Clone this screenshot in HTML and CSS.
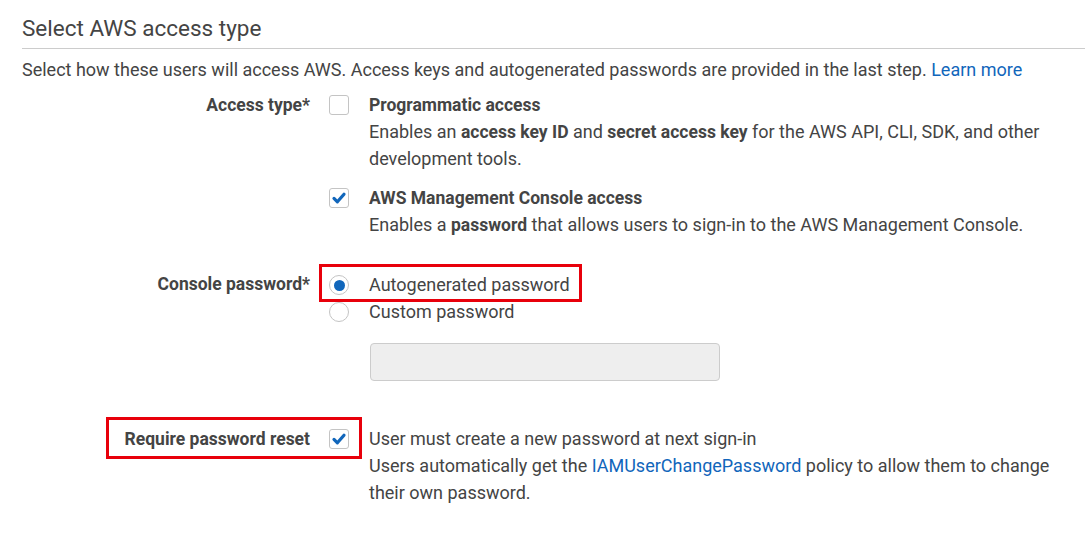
FILE: index.html
```html
<!DOCTYPE html>
<html>
<head>
<meta charset="utf-8">
<link rel="stylesheet" href="styles.css">
</head>
<body>
<div class="page">
  <h2 class="title">Select AWS access type</h2>
  <p class="intro">Select how these users will access AWS. Access keys and autogenerated passwords are provided in the last step. <a href="#" class="link">Learn more</a></p>

  <div class="row">
    <div class="label">Access type*</div>
    <div class="control">
      <div class="option">
        <span class="box"></span>
        <div class="otext">
          <div class="strong">Programmatic access</div>
          <div>Enables an <b>access key ID</b> and <b>secret access key</b> for the AWS API, CLI, SDK, and other development tools.</div>
        </div>
      </div>
      <div class="option second">
        <span class="box checked"><svg viewBox="0 0 20 20" width="20" height="20"><path d="M5 10.4 L8.4 13.8 L15 6.2" fill="none" stroke="#1166bb" stroke-width="3.2" stroke-linecap="round" stroke-linejoin="round"/></svg></span>
        <div class="otext">
          <div class="strong">AWS Management Console access</div>
          <div>Enables a <b>password</b> that allows users to sign-in to the AWS Management Console.</div>
        </div>
      </div>
    </div>
  </div>

  <div class="row pw">
    <div class="label">Console password*</div>
    <div class="control">
      <div class="option">
        <span class="radio on"></span>
        <div class="otext">Autogenerated password</div>
      </div>
      <div class="option">
        <span class="radio"></span>
        <div class="otext">Custom password</div>
      </div>
      <div class="inputwrap"><div class="input"></div></div>
    </div>
  </div>

  <div class="row reset">
    <div class="label">Require password reset</div>
    <div class="control">
      <div class="option">
        <span class="box checked"><svg viewBox="0 0 20 20" width="20" height="20"><path d="M5 10.4 L8.4 13.8 L15 6.2" fill="none" stroke="#1166bb" stroke-width="3.2" stroke-linecap="round" stroke-linejoin="round"/></svg></span>
        <div class="otext">
          <div>User must create a new password at next sign-in</div>
          <div>Users automatically get the <a href="#" class="link">IAMUserChangePassword</a> policy to allow them to change their own password.</div>
        </div>
      </div>
    </div>
  </div>

  <div class="mark mark1"></div>
  <div class="mark mark2"></div>
</div>
</body>
</html>
```
FILE: styles.css
```css
html, body {
  margin: 0;
  padding: 0;
  background: #fff;
}
.page {
  position: relative;
  width: 1085px;
  height: 533px;
  overflow: hidden;
  font-family: Roboto, "Liberation Sans", sans-serif;
  color: #444;
  font-size: 18px;
  line-height: 27px;
}
.title {
  margin: 0 0 0 22px;
  padding: 15px 0 7px;
  font-size: 22.5px;
  line-height: 26px;
  font-weight: 400;
  color: #444;
  border-bottom: 1px solid #ccc;
}
.intro {
  margin: 7px 0 0 22px;
  padding: 0;
}
.link {
  color: #1166bb;
  text-decoration: none;
}
b, .strong, .label {
  font-weight: 700;
  font-size: 17.5px;
}
b {
  line-height: 1;
}
.strong {
  position: relative;
  top: 1px;
}
.row {
  display: grid;
  grid-template-columns: 288px 1fr;
  column-gap: 19px;
  margin-left: 22px;
  width: 1043px;
}
.row { margin-top: 8px; }
.row.pw { margin-top: 33px; }
.row.reset { margin-top: 44px; }
.label {
  text-align: right;
}
.row:first-of-type .label,
.row.reset .label {
  position: relative;
  top: 1px;
}
.control {
  display: flex;
  flex-direction: column;
}
.option {
  display: flex;
  align-items: flex-start;
  column-gap: 20px;
}
.option.second {
  margin-top: 12px;
}
.otext {
  flex: 1;
}
.box {
  flex: none;
  width: 18px;
  height: 18px;
  margin-top: 3.5px;
  border: 1px solid #c4c4c4;
  border-radius: 3px;
  position: relative;
  box-sizing: content-box;
}
.box svg {
  position: absolute;
  left: -1px;
  top: -1px;
}
.radio {
  flex: none;
  width: 18px;
  height: 18px;
  margin-top: 4px;
  border: 1px solid #c4c4c4;
  border-radius: 50%;
  position: relative;
}
.radio.on::after {
  content: "";
  position: absolute;
  left: 3.5px;
  top: 3.5px;
  width: 11px;
  height: 11px;
  border-radius: 50%;
  background: #1166bb;
}
.inputwrap {
  padding: 18px 0 0 41px;
}
.input {
  width: 348px;
  height: 36px;
  background: #eee;
  border: 1px solid #ccc;
  border-radius: 4px;
}
.mark {
  position: absolute;
  border: 3px solid #e8000b;
  box-sizing: border-box;
}
.mark1 {
  left: 319px;
  top: 264px;
  width: 263px;
  height: 38px;
}
.mark2 {
  left: 106px;
  top: 417px;
  width: 256px;
  height: 42px;
}
```
